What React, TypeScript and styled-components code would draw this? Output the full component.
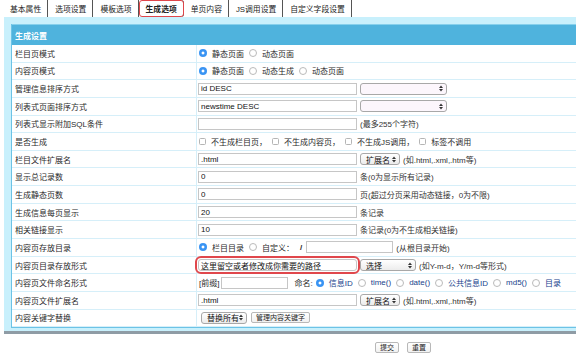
import React from "react";
import styled, { createGlobalStyle } from "styled-components";

const GlobalStyle = createGlobalStyle`
  html, body {
    margin: 0;
    padding: 0;
    background: #fff;
  }
  body {
    font-family: "Liberation Sans", "Noto Sans CJK SC", sans-serif;
    font-size: 8px;
    color: #262626;
    overflow: hidden;
  }
`;

const tabs = ["基本属性", "选项设置", "模板选项", "生成选项", "单页内容", "JS调用设置", "自定义字段设置"];

const Arrows = () => (
  <svg width="4" height="7" viewBox="0 0 4 7">
    <polygon points="0,3 2,0.4 4,3" fill="#333" />
    <polygon points="0,4 2,6.6 4,4" fill="#333" />
  </svg>
);

const Select = ({ w, label, tint }: { w: number; label?: string; tint?: boolean }) => (
  <SelectBox $w={w} $tint={tint}>
    <span>{label}</span>
    <Arrows />
  </SelectBox>
);

const Opt = ({ on, children, blue }: { on?: boolean; children: React.ReactNode; blue?: boolean }) => (
  <OptLabel $blue={blue}>
    <Radio $on={on} />
    {children}
  </OptLabel>
);

const Check = ({ children }: { children: React.ReactNode }) => (
  <OptLabel>
    <CheckBox />
    {children}
  </OptLabel>
);

const App = () => {
  return (
    <Page>
      <GlobalStyle />
      <TabBar>
        {tabs.map((t) => (
          <Tab key={t} $active={t === "生成选项"}>
            {t}
          </Tab>
        ))}
      </TabBar>
      <Panel>
        <FormTable>
          <HeaderRow>生成设置</HeaderRow>
          <Row>
            <Label>栏目页模式</Label>
            <Value>
              <Opt on>静态页面</Opt>
              <Opt>动态页面</Opt>
            </Value>
          </Row>
          <Row>
            <Label>内容页模式</Label>
            <Value>
              <Opt on>静态页面</Opt>
              <Opt>动态生成</Opt>
              <Opt>动态页面</Opt>
            </Value>
          </Row>
          <Row>
            <Label>管理信息排序方式</Label>
            <Value>
              <TextInput readOnly value="id DESC" />
              <Select w={87} tint />
            </Value>
          </Row>
          <Row>
            <Label>列表式页面排序方式</Label>
            <Value>
              <TextInput readOnly value="newstime DESC" />
              <Select w={87} tint />
            </Value>
          </Row>
          <Row>
            <Label>列表式显示附加SQL条件</Label>
            <Value>
              <TextInput readOnly value="" />
              <Hint>(最多255个字符)</Hint>
            </Value>
          </Row>
          <Row>
            <Label>是否生成</Label>
            <Value>
              <Check>不生成栏目页，</Check>
              <Check>不生成内容页，</Check>
              <Check>不生成JS调用，</Check>
              <Check>标签不调用</Check>
            </Value>
          </Row>
          <Row>
            <Label>栏目文件扩展名</Label>
            <Value>
              <TextInput readOnly value=".html" />
              <Select w={40} label="扩展名" />
              <Hint>(如.html,.xml,.htm等)</Hint>
            </Value>
          </Row>
          <Row>
            <Label>显示总记录数</Label>
            <Value>
              <TextInput readOnly value="0" />
              <Hint>条(0为显示所有记录)</Hint>
            </Value>
          </Row>
          <Row>
            <Label>生成静态页数</Label>
            <Value>
              <TextInput readOnly value="0" />
              <Hint>页(超过分页采用动态链接，0为不限)</Hint>
            </Value>
          </Row>
          <Row>
            <Label>生成信息每页显示</Label>
            <Value>
              <TextInput readOnly value="20" />
              <Hint>条记录</Hint>
            </Value>
          </Row>
          <Row>
            <Label>相关链接显示</Label>
            <Value>
              <TextInput readOnly value="10" />
              <Hint>条记录(0为不生成相关链接)</Hint>
            </Value>
          </Row>
          <Row>
            <Label>内容页存放目录</Label>
            <Value>
              <Opt on>栏目目录</Opt>
              <Opt>自定义：</Opt>
              <Slash>/</Slash>
              <TextInput readOnly value="" $w={87} />
              <Hint>(从根目录开始)</Hint>
            </Value>
          </Row>
          <Row>
            <Label>内容页目录存放形式</Label>
            <Value>
              <TextInput readOnly value="这里留空或者修改成你需要的路径" $marked />
              <Select w={56} label="选择" />
              <Hint>(如Y-m-d，Y/m-d等形式)</Hint>
            </Value>
          </Row>
          <Row>
            <Label>内容页文件命名形式</Label>
            <Value>
              <Prefix>[前缀]</Prefix>
              <TextInput readOnly value="" $w={67} />
              <Naming>命名:</Naming>
              <Opt on blue>信息ID</Opt>
              <Opt blue>time()</Opt>
              <Opt blue>date()</Opt>
              <Opt blue>公共信息ID</Opt>
              <Opt blue>md5()</Opt>
              <Opt blue>目录</Opt>
            </Value>
          </Row>
          <Row>
            <Label>内容页文件扩展名</Label>
            <Value>
              <TextInput readOnly value=".html" />
              <Select w={40} label="扩展名" />
              <Hint>(如.html,.xml,.htm等)</Hint>
            </Value>
          </Row>
          <Row>
            <Label>内容关键字替换</Label>
            <Value>
              <Select w={46} label="替换所有" />
              <SmallButton>管理内容关键字</SmallButton>
            </Value>
          </Row>
        </FormTable>
      </Panel>
      <Actions>
        <SmallButton>提交</SmallButton>
        <SmallButton>重置</SmallButton>
      </Actions>
    </Page>
  );
};

const Page = styled.div`
  width: 576px;
`;

const TabBar = styled.div`
  display: flex;
  height: 17px;
  padding-left: 3px;
`;

const Tab = styled.div<{ $active?: boolean }>`
  display: flex;
  align-items: center;
  padding: 0 6px 0 7px;
  font-size: 7.8px;
  color: #222;
  border-right: 1px solid #555;
  font-weight: ${({ $active }) => ($active ? 700 : 400)};
  border-radius: ${({ $active }) => ($active ? "3px" : "0")};
  outline: ${({ $active }) => ($active ? "1.5px solid #e0464b" : "none")};
  outline-offset: -1px;
`;

const Panel = styled.div`
  margin-left: 4px;
  background: #c8f0fc;
  padding: 7px 0 3px 7px;
  border-bottom: 3px solid #8f9ca5;
`;

const FormTable = styled.div`
  border-left: 1px solid #6cc3e6;
  border-bottom: 1px solid #6cc3e6;
  background: #fff;
`;

const HeaderRow = styled.div`
  box-sizing: border-box;
  height: 21px;
  display: flex;
  align-items: center;
  padding-left: 3px;
  background: #4fb3dd;
  border-top: 1px solid #86d0ec;
  color: #fff;
  font-weight: 700;
`;

const Row = styled.div`
  box-sizing: border-box;
  display: grid;
  grid-template-columns: 185px 1fr;
  height: 17.65px;
  border-bottom: 1px solid #d6eff9;
`;

const Label = styled.div`
  display: flex;
  align-items: center;
  padding-left: 3px;
  border-right: 1px solid #d6eff9;
  color: #2a2a2a;
  white-space: nowrap;
`;

const Value = styled.div`
  display: flex;
  align-items: center;
  padding-left: 1px;
  white-space: nowrap;
`;

const TextInput = styled.input<{ $w?: number; $marked?: boolean }>`
  box-sizing: border-box;
  width: ${({ $w }) => $w ?? 159}px;
  height: 12px;
  margin: 0;
  padding: 0 2px;
  border: 1px solid #c6c6c6;
  background: #fff;
  font: inherit;
  font-size: 8px;
  color: #111;
  border-radius: ${({ $marked }) => ($marked ? "3px" : "0")};
  outline: ${({ $marked }) => ($marked ? "2px solid #e0474c" : "none")};
  outline-offset: 1px;
`;

const SelectBox = styled.div<{ $w: number; $tint?: boolean }>`
  box-sizing: border-box;
  width: ${({ $w }) => $w}px;
  height: 12px;
  margin-left: 3px;
  display: flex;
  align-items: center;
  justify-content: space-between;
  padding: 0 3px 0 5px;
  border: 1px solid #a8a8a8;
  border-radius: 3px;
  background: ${({ $tint }) => ($tint ? "#fcf6fc" : "linear-gradient(#ffffff, #ececec)")};
  color: #111;
  font-size: 8px;
`;

const Hint = styled.span`
  margin-left: 3px;
  color: #333;
`;

const OptLabel = styled.span<{ $blue?: boolean }>`
  display: inline-flex;
  align-items: center;
  gap: 5px;
  margin-left: 1px;
  margin-right: 4px;
  color: ${({ $blue }) => ($blue ? "#203f8c" : "#2a2a2a")};
`;

const Radio = styled.span<{ $on?: boolean }>`
  box-sizing: border-box;
  width: 8px;
  height: 8px;
  flex-shrink: 0;
  border-radius: 50%;
  border: ${({ $on }) => ($on ? "none" : "1px solid #bababa")};
  background: ${({ $on }) =>
    $on ? "radial-gradient(circle, #fff 0 1.3px, #3a94f3 1.7px)" : "#fff"};
`;

const CheckBox = styled.span`
  box-sizing: border-box;
  width: 7px;
  height: 7px;
  flex-shrink: 0;
  border: 1px solid #b5b5b5;
  border-radius: 1.5px;
  background: #fff;
`;

const Slash = styled.span`
  margin: 0 4px 0 2px;
  font-weight: 700;
`;

const Prefix = styled.span`
  margin: 0 2px 0 1px;
`;

const Naming = styled.span`
  margin: 0 2px 0 6px;
`;

const SmallButton = styled.button`
  box-sizing: border-box;
  height: 11px;
  margin: 0 0 0 4px;
  padding: 0 4px;
  border: 1px solid #b8b8b8;
  border-radius: 2px;
  background: linear-gradient(#ffffff, #f1f1f1);
  font-family: "Liberation Sans", "Noto Sans CJK SC", sans-serif;
  font-size: 7px;
  line-height: 9px;
  color: #222;
`;

const Actions = styled.div`
  display: flex;
  gap: 4px;
  padding-left: 371px;
  margin-top: 8px;
`;

export default App;
